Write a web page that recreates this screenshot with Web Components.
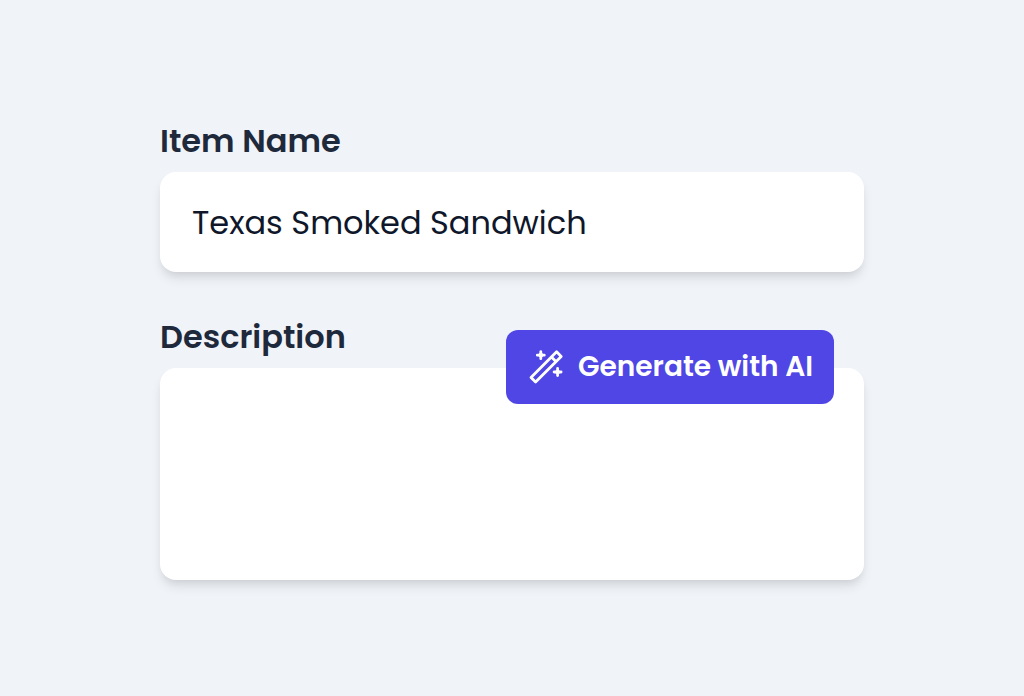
<!DOCTYPE html>
<html lang="en">
<head>
<meta charset="utf-8">
<meta name="viewport" content="width=device-width, initial-scale=1">
<title>Menu item</title>
<style>
body { margin: 0; background: #f0f3f8; font-family: Poppins, Inter, sans-serif; }
</style>
</head>
<body>
<item-form>
  <form-field label="Item Name" value="Texas Smoked Sandwich"></form-field>
  <form-field label="Description" multiline>
    <ai-button slot="action">Generate with AI</ai-button>
  </form-field>
</item-form>
<script>
customElements.define('item-form', class extends HTMLElement {
  constructor() {
    super();
    this.attachShadow({ mode: 'open' }).innerHTML = `
      <style>
        :host { display: block; }
        form {
          box-sizing: border-box; min-height: 100vh; padding: 40px 160px;
          display: flex; flex-direction: column; justify-content: center; gap: 40px;
        }
        @media (max-width: 800px) { form { padding: 40px 24px; } }
      </style>
      <form><slot></slot></form>`;
  }
});

customElements.define('form-field', class extends HTMLElement {
  constructor() {
    super();
    const root = this.attachShadow({ mode: 'open' });
    root.innerHTML = `
      <style>
        :host { display: flex; flex-direction: column; gap: 6px; }
        label { font-size: 32px; line-height: 50px; font-weight: 600; color: #1e293b; }
        .box { position: relative; display: flex; }
        input, textarea {
          box-sizing: border-box; width: 100%; margin: 0; border: 0; outline: 0;
          border-radius: 16px; padding: 26px 32px 24px; background: #fff; color: #0f172a;
          font-family: inherit; font-size: 32px; line-height: 50px; resize: none;
          box-shadow: 0 8px 12px -2px rgb(0 0 0 / .1), 0 4px 8px -4px rgb(0 0 0 / .1);
        }
        input { height: 100px; }
        textarea { height: 212px; }
        ::slotted([slot=action]) { position: absolute; right: 30px; top: -38px; }
      </style>
      <label for="control"></label>
      <div class="box"><slot name="action"></slot></div>`;
    root.querySelector('label').textContent = this.getAttribute('label');
    const control = document.createElement(this.hasAttribute('multiline') ? 'textarea' : 'input');
    control.id = 'control';
    control.value = this.getAttribute('value') || '';
    root.querySelector('.box').prepend(control);
  }
});

customElements.define('ai-button', class extends HTMLElement {
  constructor() {
    super();
    this.attachShadow({ mode: 'open' }).innerHTML = `
      <style>
        :host { display: block; }
        button {
          display: flex; align-items: center; gap: 14px; margin: 0; border: 0;
          height: 74px; padding: 0 21px 0 22px; border-radius: 12px; background: #4f46e5; color: #fff;
          font-family: inherit; font-size: 28px; line-height: 40px; font-weight: 600;
          white-space: nowrap; cursor: pointer;
        }
        svg { width: 36px; height: 36px; flex: none; }
      </style>
      <button type="button">
        <svg viewBox="0 0 36 36" aria-hidden="true">
          <path d="M28.6 2.8 33.2 7.4 7.6 33 3 28.4ZM23.4 8 28 12.6" fill="none" stroke="#fff" stroke-width="2.8" stroke-linejoin="round"/>
          <g fill="#fff" stroke="#fff" stroke-width="2.8" stroke-linecap="round" stroke-linejoin="round">
            <path d="M12.8 2.7V9.7M9.3 6.2H16.3M12.8 4.6 14.4 6.2 12.8 7.8 11.2 6.2Z"/>
            <path d="M29.6 19.5V26.5M26.1 23H33.1M29.6 21.4 31.2 23 29.6 24.6 28 23Z"/>
          </g>
        </svg>
        <span><slot></slot></span>
      </button>`;
  }
});
</script>
</body>
</html>
